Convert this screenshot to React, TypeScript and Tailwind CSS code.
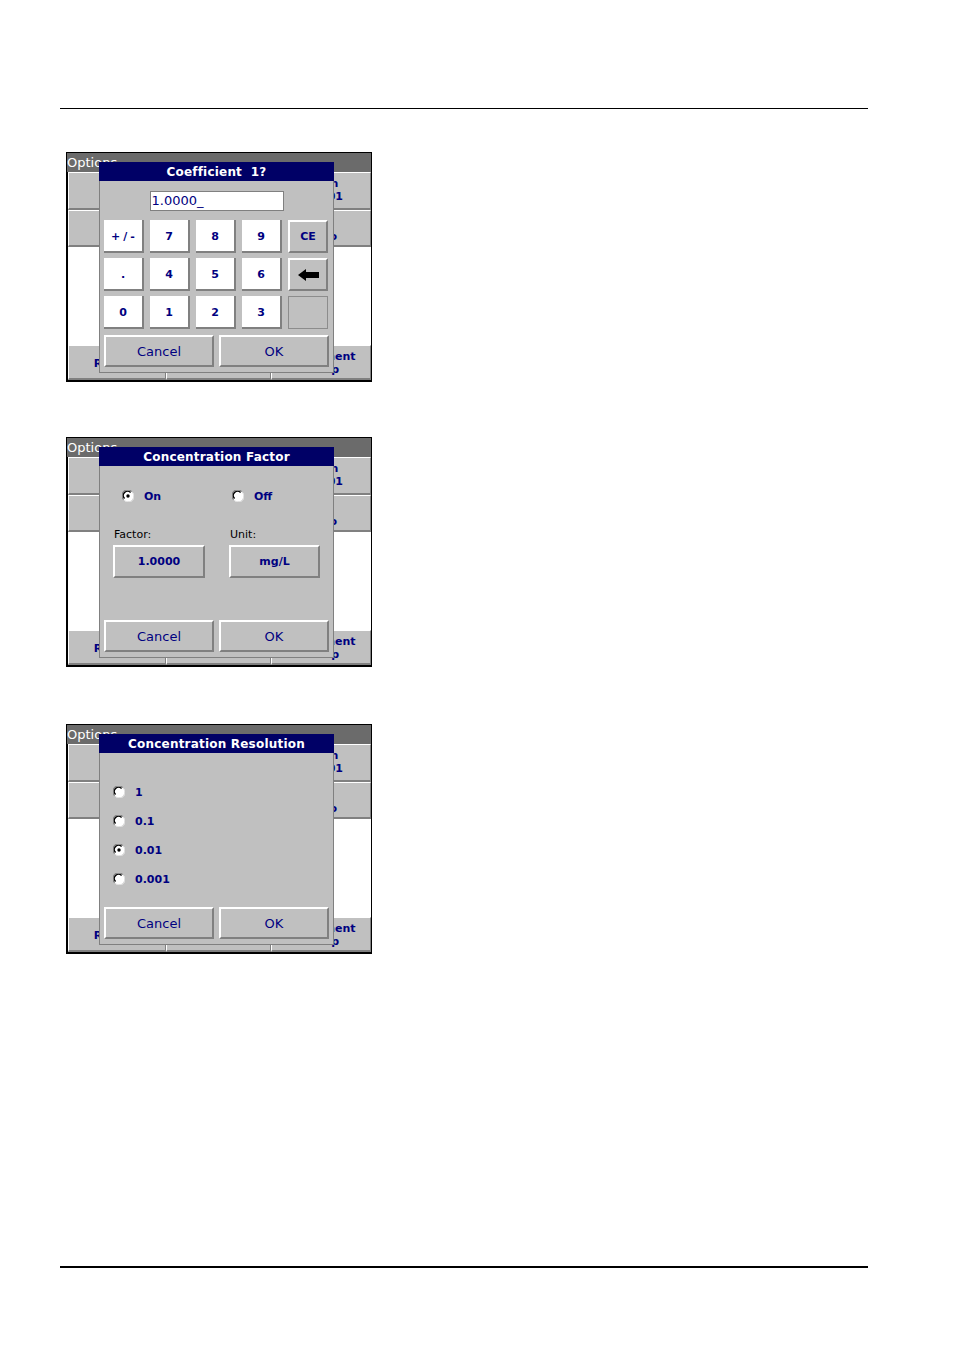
import React from 'react';

const font = { fontFamily: '"DejaVu Sans", Verdana, sans-serif' };

const raised =
  'border-t-2 border-l-2 border-r-2 border-b-2 border-t-white border-l-white border-r-[#808080] border-b-[#808080]';

function Radio({ checked }: { checked?: boolean }) {
  return (
    <svg width="12" height="12" viewBox="0 0 12 12" className="shrink-0">
      <circle cx="6" cy="6" r="5.5" fill="#ffffff" />
      <path d="M1.6 9.6 A5.2 5.2 0 0 1 9.6 1.6" stroke="#808080" strokeWidth="1.2" fill="none" />
      <path d="M2.6 8.6 A4 4 0 0 1 8.6 2.6" stroke="#000000" strokeWidth="1.4" fill="none" />
      <path d="M2.4 10.4 A5.2 5.2 0 0 0 10.4 2.4" stroke="#e8e8e8" strokeWidth="1" fill="none" />
      {checked && <circle cx="6" cy="6" r="1.7" fill="#000000" />}
    </svg>
  );
}

// background screen button; labels are mostly hidden under the dialog
function BgBtn({ lines, className }: { lines: string[]; className?: string }) {
  return (
    <div
      className={`bg-[#c0c0c0] border-t border-l border-t-white border-l-white border-b-2 border-r border-b-[#808080] border-r-[#808080] flex flex-col text-[11px] leading-[13px] font-bold text-[#000080] whitespace-nowrap overflow-hidden ${className ?? ''}`}
    >
      {lines.map(l => (
        <span key={l}>{l}</span>
      ))}
    </div>
  );
}

function Dialog({ title, children }: { title: string; children: React.ReactNode }) {
  return (
    <div className="absolute left-[31px] top-[9px] w-[235px] h-[211px] flex flex-col">
      <div className="h-[19px] pt-[2px] bg-[#000066] text-white font-bold text-[12px] leading-[17px] text-center whitespace-pre tracking-[0.2px]">
        {title}
      </div>
      <div className="flex-1 bg-[#c0c0c0] border-l border-r border-b border-[#808080] flex flex-col px-[4px] pb-[5px]">
        {children}
        <div className="mt-auto flex gap-[5px]">
          <div className={`w-[110px] h-[32px] pt-[2px] bg-[#c0c0c0] ${raised} flex items-center justify-center text-[13px] text-[#000080]`}>
            Cancel
          </div>
          <div className={`w-[110px] h-[32px] pt-[2px] bg-[#c0c0c0] ${raised} flex items-center justify-center text-[13px] text-[#000080]`}>
            OK
          </div>
        </div>
      </div>
    </div>
  );
}

function Screen({ title, children }: { title: string; children: React.ReactNode }) {
  return (
    <div className="relative w-[306px] h-[230px] border-t border-r border-l-2 border-b-2 border-black bg-white flex flex-col">
      <div className="h-[19px] bg-[#6b6b6b] text-white text-[13px] leading-[19px] -ml-px">Options</div>
      <div className="flex h-[38px]">
        <BgBtn className="w-[150px]" lines={[]} />
        <BgBtn className="flex-1 items-center pt-[4px]" lines={['Concentration', 'Resolution 0.01']} />
      </div>
      <div className="flex h-[37px]">
        <BgBtn className="w-[150px]" lines={[]} />
        <BgBtn className="flex-1 items-end pr-[33px] pt-[19px]" lines={['o']} />
      </div>
      <div className="flex-1 bg-white" />
      <div className="flex h-[35px]">
        <BgBtn className="w-[98px] items-center pr-[4px] pt-[11px]" lines={['Return']} />
        <BgBtn className="w-[105px]" lines={[]} />
        <BgBtn className="flex-1 items-center pt-[4px]" lines={['Instrument', 'Setup']} />
      </div>
      <Dialog title={title}>{children}</Dialog>
    </div>
  );
}

function Key({ children, kind = 'white' }: { children?: React.ReactNode; kind?: 'white' | 'gray' | 'empty' }) {
  const cls =
    kind === 'white'
      ? 'bg-white pt-[3px] border-r-2 border-b-2 border-r-[#808080] border-b-[#808080]'
      : kind === 'gray'
      ? `bg-[#c0c0c0] pt-[1px] ${raised}`
      : 'bg-[#c0c0c0] border border-[#8c8c8c]';
  return (
    <div className={`h-[33px] flex items-center justify-center text-[11px] font-bold text-[#000080] ${cls}`}>
      {children}
    </div>
  );
}

function BackArrow() {
  return (
    <svg width="21" height="12" viewBox="0 0 21 12">
      <polygon points="0,6 8,0 8,3 21,3 21,9 8,9 8,12" fill="#000000" />
    </svg>
  );
}

function Keypad() {
  return (
    <>
      <div className="mt-[10px] self-center w-[134px] h-[20px] bg-white border border-[#808080] text-[13px] leading-[18px] text-[#000080] pl-[1px]">
        1.0000_
      </div>
      <div className="mt-[9px] grid grid-cols-[repeat(5,40px)] gap-x-[6px] gap-y-[5px]">
        <Key><span className="tracking-[3px] pl-[3px]">+/-</span></Key>
        <Key>7</Key>
        <Key>8</Key>
        <Key>9</Key>
        <Key kind="gray">CE</Key>
        <Key>.</Key>
        <Key>4</Key>
        <Key>5</Key>
        <Key>6</Key>
        <Key kind="gray"><BackArrow /></Key>
        <Key>0</Key>
        <Key>1</Key>
        <Key>2</Key>
        <Key>3</Key>
        <Key kind="empty" />
      </div>
    </>
  );
}

function FactorBody() {
  return (
    <>
      <div className="mt-[23px] flex pl-[18px] text-[11px] font-bold text-[#000080]">
        <div className="w-[110px] flex items-center gap-[10px]">
          <Radio checked />
          <span className="leading-[12px] pt-[2px]">On</span>
        </div>
        <div className="flex items-center gap-[10px]">
          <Radio />
          <span className="leading-[12px] pt-[2px]">Off</span>
        </div>
      </div>
      <div className="mt-[25px] flex gap-[24px] pl-[9px]">
        <div className="flex flex-col">
          <div className="h-[17px] text-[11px] leading-[13px] text-black pl-px">Factor:</div>
          <div className={`w-[92px] h-[33px] pt-[2px] bg-[#c0c0c0] ${raised} flex items-center justify-center text-[11px] font-bold text-[#000080]`}>
            1.0000
          </div>
        </div>
        <div className="flex flex-col">
          <div className="h-[17px] text-[11px] leading-[13px] text-black pl-px">Unit:</div>
          <div className={`w-[91px] h-[33px] pt-[2px] bg-[#c0c0c0] ${raised} flex items-center justify-center text-[11px] font-bold text-[#000080]`}>
            mg/L
          </div>
        </div>
      </div>
    </>
  );
}

function ResolutionBody() {
  const opts = [
    { v: '1', c: false },
    { v: '0.1', c: false },
    { v: '0.01', c: true },
    { v: '0.001', c: false },
  ];
  return (
    <div className="mt-[24px] flex flex-col pl-[9px]">
      {opts.map(o => (
        <div key={o.v} className="h-[29px] flex items-center gap-[10px] text-[11px] font-bold text-[#000080]">
          <Radio checked={o.c} />
          <span className="leading-[12px] pt-[2px]">{o.v}</span>
        </div>
      ))}
    </div>
  );
}

export default function App() {
  return (
    <div className="w-[954px] h-[1350px] bg-white flex flex-col" style={font}>
      <div className="mt-[108px] ml-[60px] w-[808px] h-px bg-black" />
      <div className="ml-[66px] mt-[43px]">
        <Screen title="Coefficient  1?">
          <Keypad />
        </Screen>
      </div>
      <div className="ml-[66px] mt-[55px]">
        <Screen title="Concentration Factor">
          <FactorBody />
        </Screen>
      </div>
      <div className="ml-[66px] mt-[57px]">
        <Screen title="Concentration Resolution">
          <ResolutionBody />
        </Screen>
      </div>
      <div className="mt-[312px] ml-[60px] w-[808px] h-[2px] bg-black" />
    </div>
  );
}
